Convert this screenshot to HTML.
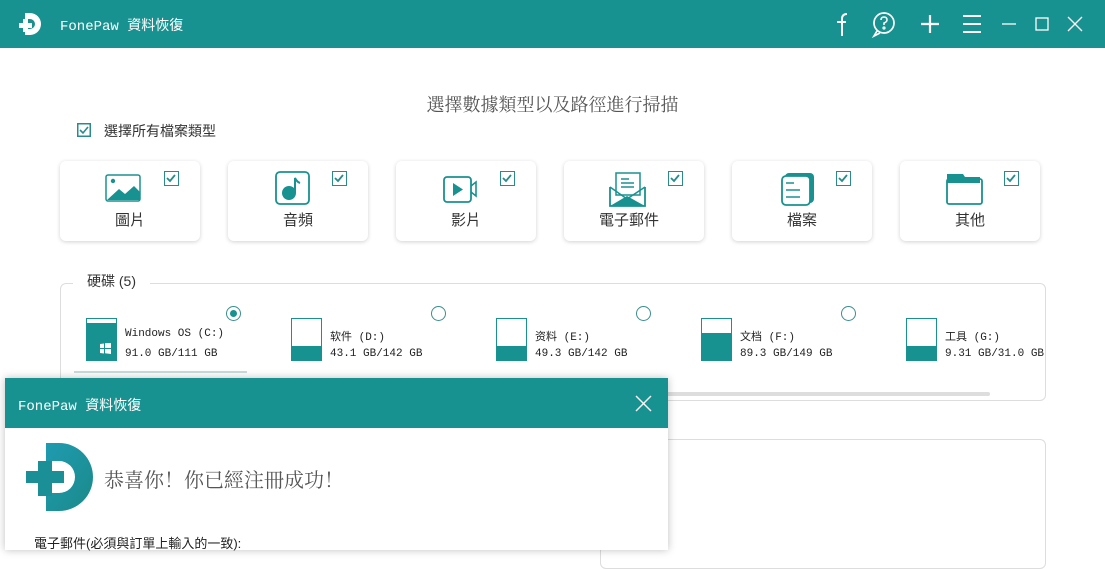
<!DOCTYPE html>
<html><head><meta charset="utf-8"><style>
*{margin:0;padding:0;box-sizing:border-box}
body{width:1105px;height:550px;overflow:hidden;background:#fff;position:relative;font-family:"Liberation Sans","Noto Sans CJK TC",sans-serif;color:#333}
.abs{position:absolute}
.tb{left:0;top:0;width:1105px;height:48px;background:#189290}
.card{position:absolute;top:161px;width:140px;height:80px;background:#fff;border-radius:6px;box-shadow:0 1px 4px rgba(0,0,0,.18)}
.card .cb{position:absolute;left:104px;top:10px;width:15px;height:15px;border:1.5px solid #2a8c8a}
.card .cb svg{position:absolute;left:0;top:0}
.card .lbl{position:absolute;left:0;width:140px;top:48px;text-align:center;font-size:15px;color:#333}
.card .ic{position:absolute;left:44px;top:10px}
.mono{font-family:"Liberation Mono","Noto Sans CJK TC",monospace}
.drive{position:absolute;top:318px}
.dicon{position:absolute;left:0;top:0;width:31px;height:43px;border:1.5px solid #189290;background:#fff}
.dicon div{position:absolute;left:0;right:0;bottom:0;background:#189290}
.dt{position:absolute;left:39px;white-space:nowrap;font-size:11px;color:#222}
.radio{position:absolute;top:306px;width:15px;height:15px;border-radius:50%;border:1.5px solid #3a8f8d}
</style></head><body>
<div class="abs tb"></div>
<svg class="abs" style="left:17px;top:11px" width="28" height="28" viewBox="0 0 28 28"><path d="M8 2h5a11 11 0 0 1 0 22H8v-6h5a5 5 0 0 0 0-10H8z" fill="#fff"/><path d="M6 8h5v4h4v5h-4v4H6v-4H2v-5h4z" fill="#fff"/></svg>
<div class="abs mono" style="left:60px;top:15px;color:#fff;font-size:14px">FonePaw 資料恢復</div>
<svg class="abs" style="left:825px;top:10px" width="270" height="30" viewBox="0 0 270 30" fill="none" stroke="#fff" stroke-width="2">
<path d="M17 26V9q0-5 5-5"/><path d="M12 12h9"/>
<circle cx="59" cy="13" r="10" stroke-width="1.7"/><path d="M52 21l-3 5 6-3" stroke-width="1.7"/><path d="M56 10q0-3 3-3t3 3q0 2-3 3v2" stroke-width="1.5"/><circle cx="59" cy="18" r=".6"/>
<path d="M105 5v18M96 14h18" stroke-width="2.2"/>
<path d="M138 6h18M138 14h18M138 22h18"/>
<path d="M177 14h14" stroke-width="1.3"/>
<rect x="211" y="8" width="12" height="12" stroke-width="1.3"/>
<path d="M243 7l14 14M257 7l-14 14" stroke-width="1.3"/>
</svg>

<div class="abs" style="left:0;width:1105px;top:91px;text-align:center;font-size:18px;color:#555;font-family:'Liberation Serif','Noto Serif CJK SC',serif">選擇數據類型以及路徑進行掃描</div>
<svg class="abs" style="left:77px;top:123px" width="14" height="14"><rect x=".75" y=".75" width="12.5" height="12.5" fill="none" stroke="#2a8c8a" stroke-width="1.5"/><path d="M3 7l3 3 5-6" fill="none" stroke="#2a8c8a" stroke-width="1.6"/></svg>
<div class="abs" style="left:104px;top:121px;font-size:14px;color:#333">選擇所有檔案類型</div>

<div class="card" style="left:60px"><svg class="ic" width="40" height="32" viewBox="0 0 40 32"><rect x="2" y="4" width="34" height="26" rx="2" fill="none" stroke="#189290" stroke-width="1.5"/><circle cx="9" cy="10" r="2.2" fill="#189290"/><path d="M3 29l12-11 6 5 9-8 6 6v8H3z" fill="#189290"/></svg><div class="cb"><svg width="12" height="12"><path d="M2 6l3 3 5-6" fill="none" stroke="#2a8c8a" stroke-width="1.8"/></svg></div><div class="lbl">圖片</div></div>
<div class="card" style="left:228px"><svg class="ic" width="40" height="34" viewBox="0 0 40 34"><rect x="4" y="1" width="33" height="32" rx="4" fill="none" stroke="#189290" stroke-width="1.8"/><circle cx="17" cy="22" r="7" fill="#189290"/><path d="M23 22V7q2 4 5 5" fill="none" stroke="#189290" stroke-width="2"/></svg><div class="cb"><svg width="12" height="12"><path d="M2 6l3 3 5-6" fill="none" stroke="#2a8c8a" stroke-width="1.8"/></svg></div><div class="lbl">音頻</div></div>
<div class="card" style="left:396px"><svg class="ic" width="40" height="32" viewBox="0 0 40 32"><rect x="4" y="6" width="27" height="25" rx="3" fill="none" stroke="#189290" stroke-width="1.8"/><path d="M13 12v13l10-6.5z" fill="#189290"/><path d="M31 15l5-4v14l-5-4" fill="none" stroke="#189290" stroke-width="1.6"/></svg><div class="cb"><svg width="12" height="12"><path d="M2 6l3 3 5-6" fill="none" stroke="#2a8c8a" stroke-width="1.8"/></svg></div><div class="lbl">影片</div></div>
<div class="card" style="left:564px"><svg class="ic" width="40" height="36" viewBox="0 0 40 36"><rect x="8" y="2" width="24" height="22" fill="none" stroke="#189290" stroke-width="1.5"/><path d="M13 8h8M13 12h13M13 16h13" stroke="#189290" stroke-width="1.5"/><path d="M2 16v19h35V16" fill="none" stroke="#189290" stroke-width="1.8"/><path d="M2 35l17-10 18 10z" fill="#189290"/><path d="M2 16l17 12 18-12" fill="none" stroke="#189290" stroke-width="1.5"/></svg><div class="cb"><svg width="12" height="12"><path d="M2 6l3 3 5-6" fill="none" stroke="#2a8c8a" stroke-width="1.8"/></svg></div><div class="lbl" style="left:-5px">電子郵件</div></div>
<div class="card" style="left:732px"><svg class="ic" width="40" height="36" viewBox="0 0 40 36"><rect x="9" y="2" width="29" height="30" rx="4" fill="#189290"/><rect x="6" y="5" width="28" height="29" rx="4" fill="#fff" stroke="#189290" stroke-width="1.8"/><path d="M10 12h8M10 19h14M10 26h14" stroke="#189290" stroke-width="1.6"/></svg><div class="cb"><svg width="12" height="12"><path d="M2 6l3 3 5-6" fill="none" stroke="#2a8c8a" stroke-width="1.8"/></svg></div><div class="lbl">檔案</div></div>
<div class="card" style="left:900px"><svg class="ic" width="40" height="36" viewBox="0 0 40 36"><path d="M3 3h16l2 3h15v6H3z" fill="#189290"/><rect x="3" y="8" width="35" height="25" rx="2" fill="none" stroke="#189290" stroke-width="1.8"/></svg><div class="cb"><svg width="12" height="12"><path d="M2 6l3 3 5-6" fill="none" stroke="#2a8c8a" stroke-width="1.8"/></svg></div><div class="lbl">其他</div></div>

<div class="abs" style="left:60px;top:283px;width:986px;height:118px;border:1px solid #ddd;border-radius:6px"></div>
<div class="abs" style="left:73px;top:271px;padding:0 14px;background:#fff;font-size:14px;color:#333">硬碟 (5)</div>

<div class="drive" style="left:86px"><div class="dicon"><div style="height:37px"></div><svg style="position:absolute;left:13px;top:24px" width="11" height="11"><path d="M0 1l4-.5V5H0zM5 .3L11 0v5H5zM0 6h4v4.5L0 10zM5 6h6v5l-6-.7z" fill="#fff"/></svg></div><div class="dt mono" style="top:10px">Windows OS (C:)</div><div class="dt mono" style="top:30px">91.0 GB/111 GB</div></div>
<div class="drive" style="left:291px"><div class="dicon"><div style="height:14px"></div></div><div class="dt mono" style="top:10px">软件 (D:)</div><div class="dt mono" style="top:30px">43.1 GB/142 GB</div></div>
<div class="drive" style="left:496px"><div class="dicon"><div style="height:14px"></div></div><div class="dt mono" style="top:10px">资料 (E:)</div><div class="dt mono" style="top:30px">49.3 GB/142 GB</div></div>
<div class="drive" style="left:701px"><div class="dicon"><div style="height:27px"></div></div><div class="dt mono" style="top:10px">文档 (F:)</div><div class="dt mono" style="top:30px">89.3 GB/149 GB</div></div>
<div class="drive" style="left:906px"><div class="dicon"><div style="height:14px"></div></div><div class="dt mono" style="top:10px">工具 (G:)</div><div class="dt mono" style="top:30px">9.31 GB/31.0 GB</div></div>
<div class="radio" style="left:226px"><div style="position:absolute;left:2.5px;top:2.5px;width:7px;height:7px;border-radius:50%;background:#189290"></div></div>
<div class="radio" style="left:431px"></div>
<div class="radio" style="left:636px"></div>
<div class="radio" style="left:841px"></div>
<div class="abs" style="left:74px;top:371px;width:173px;height:2px;background:#c8dcdc"></div>
<div class="abs" style="left:600px;top:392px;width:390px;height:4px;border-radius:2px;background:#ddd"></div>

<div class="abs" style="left:600px;top:439px;width:446px;height:130px;border:1px solid #ddd;border-radius:6px"></div>

<div class="abs" style="left:5px;top:378px;width:663px;height:172px;background:#fff;box-shadow:0 0 8px rgba(0,0,0,.25)"></div>
<div class="abs" style="left:5px;top:378px;width:663px;height:50px;background:#189290"></div>
<div class="abs mono" style="left:18px;top:395px;color:#fff;font-size:14px">FonePaw 資料恢復</div>
<svg class="abs" style="left:635px;top:395px" width="17" height="17"><path d="M1 1l15 15M16 1L1 16" stroke="#fff" stroke-width="1.4"/></svg>
<svg class="abs" style="left:26px;top:443px" width="68" height="68" viewBox="0 0 68 68"><defs><linearGradient id="g" x1="0" y1="0" x2="1" y2="1"><stop offset="0" stop-color="#1f9bb0"/><stop offset="1" stop-color="#1a8a8a"/></linearGradient></defs><path d="M20 0h13a34 34 0 0 1 0 68H20V50h13a16 16 0 0 0 0-32H20z" fill="url(#g)"/><path d="M12 18h14v10h12v12H26v13H12V40H0V28h12z" fill="#1a8f95"/></svg>
<div class="abs" style="left:104px;top:464px;font-size:20px;color:#555;font-family:'Liberation Serif','Noto Serif CJK SC',serif">恭喜你！你已經注冊成功！</div>
<div class="abs" style="left:34px;top:533px;font-size:13px;color:#222">電子郵件(必須與訂單上輸入的一致):</div>
</body></html>
